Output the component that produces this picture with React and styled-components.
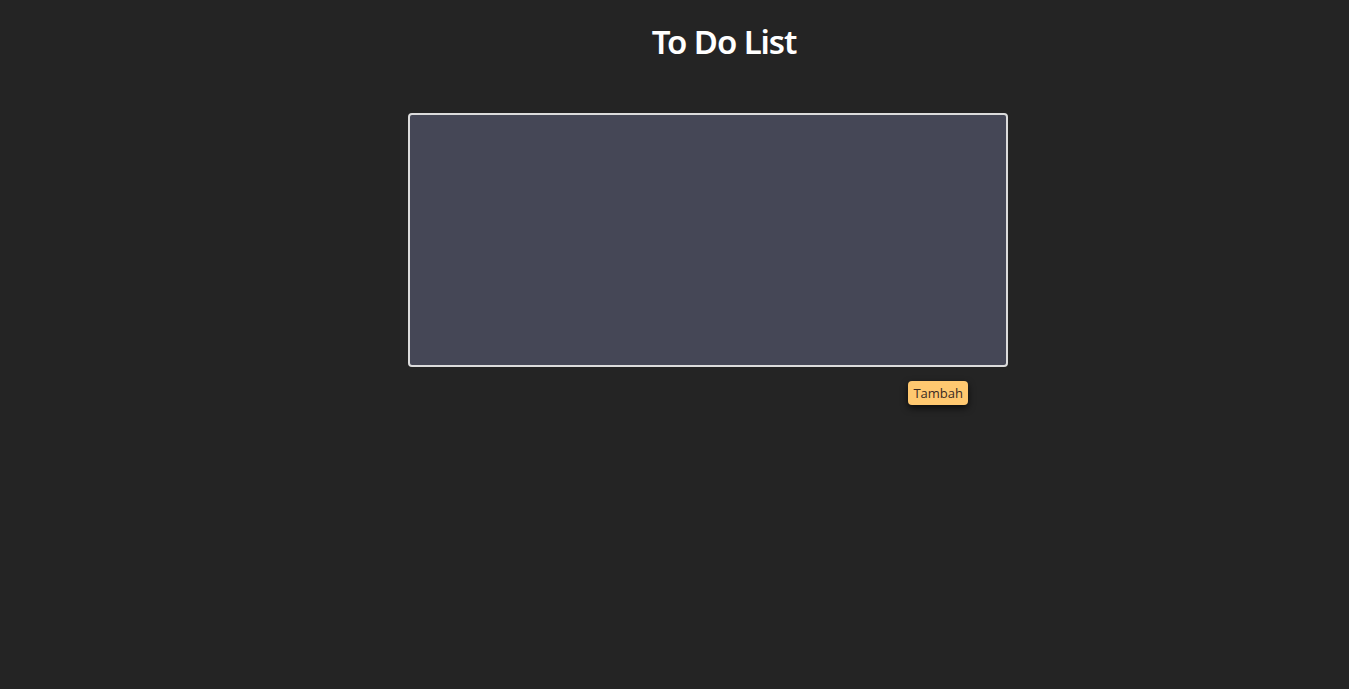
import React, { useState } from "react";
import styled, { createGlobalStyle } from "styled-components";

const Global = createGlobalStyle`
  html, body { margin: 0; padding: 0; background: #242424; }
  body { font-family: "Open Sans", "Noto Sans", sans-serif; color: #fff; }
`;

const Page = styled.main`
  min-height: 689px;
  padding-top: 20px;
  box-sizing: border-box;
`;

const Title = styled.h1`
  margin: 0 0 49px 99px;
  font-family: "Noto Sans", "Open Sans", sans-serif;
  font-size: 33px;
  line-height: 44px;
  font-weight: 600;
  letter-spacing: -1.1px;
  text-align: center;
  color: #ffffff;
`;

const Form = styled.div`
  width: 600px;
  margin-left: 408px;
  display: flex;
  flex-direction: column;
`;

const Area = styled.textarea`
  box-sizing: border-box;
  width: 600px;
  height: 254px;
  margin: 0;
  background: #454756;
  border: 2px solid #dcdcdc;
  border-radius: 4px;
  color: #fff;
  font-family: inherit;
  font-size: 14px;
  resize: none;
  outline: none;
`;

const Actions = styled.div`
  display: flex;
  justify-content: flex-end;
  padding-right: 40px;
  margin-top: 14px;
`;

const Button = styled.button`
  height: 24px;
  padding: 0 5px;
  background: #ffc870;
  color: #3a2a22;
  border: none;
  border-radius: 4px;
  font-family: "Open Sans", sans-serif;
  font-size: 13px;
  box-shadow: 0 3px 7px rgba(0, 0, 0, 0.7);
  cursor: pointer;
`;

export default function App() {
  const [text, setText] = useState("");
  return (
    <>
      <Global />
      <Page>
        <Title>To Do List</Title>
        <Form>
          <Area value={text} onChange={(e) => setText(e.target.value)} />
          <Actions>
            <Button>Tambah</Button>
          </Actions>
        </Form>
      </Page>
    </>
  );
}
